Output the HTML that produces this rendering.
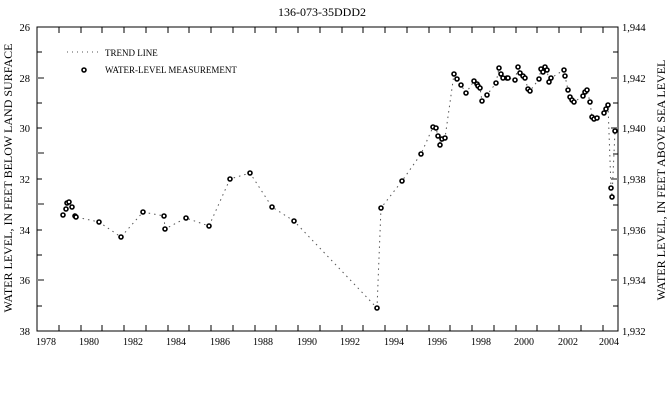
<!DOCTYPE html>
<html><head><meta charset="utf-8"><style>
html,body{margin:0;padding:0;background:#fff;}
svg{display:block;font-family:"Liberation Serif",serif;}
</style></head><body>
<svg width="671" height="410" viewBox="0 0 671 410" xmlns="http://www.w3.org/2000/svg">
<text x="322" y="16" font-size="12" text-anchor="middle">136-073-35DDD2</text>
<rect x="37" y="27" width="581" height="304" fill="none" stroke="#000" stroke-width="1"/>
<g font-size="10.5" text-anchor="end">
<text x="30" y="31">26</text><text x="30" y="82">28</text><text x="30" y="132">30</text><text x="30" y="183">32</text><text x="30" y="234">34</text><text x="30" y="284">36</text><text x="30" y="335">38</text>
</g>
<g font-size="10.5">
<text x="622" y="31">1,944</text><text x="622" y="82">1,942</text><text x="622" y="132">1,940</text><text x="622" y="183">1,938</text><text x="622" y="234">1,936</text><text x="622" y="284">1,934</text><text x="622" y="335">1,932</text>
</g>
<g font-size="10" text-anchor="middle">
<text x="46" y="345">1978</text><text x="89" y="345">1980</text><text x="133" y="345">1982</text><text x="176" y="345">1984</text><text x="220" y="345">1986</text><text x="263" y="345">1988</text><text x="307" y="345">1990</text><text x="350" y="345">1992</text><text x="394" y="345">1994</text><text x="437" y="345">1996</text><text x="481" y="345">1998</text><text x="524" y="345">2000</text><text x="568" y="345">2002</text><text x="609" y="345">2004</text>
</g>
<text transform="translate(12,178) rotate(-90)" font-size="12" text-anchor="middle">WATER LEVEL, IN FEET BELOW LAND SURFACE</text>
<text transform="translate(665,180) rotate(-90)" font-size="12" text-anchor="middle">WATER LEVEL, IN FEET ABOVE SEA LEVEL</text>
<g stroke="#000" stroke-width="1">
<path d="M59 27v6M81 27v6M102 27v6M124 27v6M146 27v6M168 27v6M189 27v6M211 27v6M233 27v6M255 27v6M276 27v6M298 27v6M320 27v6M342 27v6M363 27v6M385 27v6M407 27v6M429 27v6M450 27v6M472 27v6M494 27v6M516 27v6M537 27v6M559 27v6M581 27v6M603 27v6"/>
<path d="M59 331v-6M81 331v-6M102 331v-6M124 331v-6M146 331v-6M168 331v-6M189 331v-6M211 331v-6M233 331v-6M255 331v-6M276 331v-6M298 331v-6M320 331v-6M342 331v-6M363 331v-6M385 331v-6M407 331v-6M429 331v-6M450 331v-6M472 331v-6M494 331v-6M516 331v-6M537 331v-6M559 331v-6M581 331v-6M603 331v-6"/>
<path d="M37 52h5M37 103h5M37 128h5M37 179h5M37 230h5M37 255h5M37 306h5M618 52h-5M618 103h-5M618 154h-5M618 205h-5M618 255h-5M618 306h-5"/>
</g>
<g stroke="#888" stroke-width="2">
<path d="M37 78h7M37 153h7M37 204h7M37 280h7M618 78h-7M618 128h-7M618 179h-7M618 230h-7M618 280h-7"/>
</g>
<path d="M67 52h33" stroke="#555" stroke-width="1" stroke-dasharray="1,4"/>
<text x="105" y="56" font-size="9">TREND LINE</text>
<circle cx="84" cy="70" r="2" fill="#fff" stroke="#000" stroke-width="1.6"/>
<text x="105" y="73" font-size="9">WATER-LEVEL MEASUREMENT</text>
<polyline fill="none" stroke="#555" stroke-width="1" stroke-dasharray="1.5,4" points="63,215 66,209 67,203 69,202 72,207 75,216 76,217 99,222 121,237 143,212 164,216 165,229 186,218 209,226 230,179 250,173 272,207 294,221 377,308 381,208 402,181 421,154 433,127 436,128 438,136 440,145 442,139 445,138 454,74 457,79 461,85 466,93 474,81 477,84 478,86 480,88 482,101 487,95 496,83 499,68 501,74 503,78 507,78 508,78 515,80 518,67 520,73 523,76 525,78 528,89 530,91 539,79 541,69 543,72 545,67 547,70 549,82 551,78 564,70 565,76 568,90 570,97 572,100 574,102 583,96 585,92 587,90 590,102 592,117 594,119 597,118 604,113 606,109 608,105 611,188 612,197 615,131"/>
<g fill="#fff" stroke="#000" stroke-width="1.6">
<circle cx="63" cy="215" r="2"/><circle cx="66" cy="209" r="2"/><circle cx="67" cy="203" r="2"/><circle cx="69" cy="202" r="2"/><circle cx="72" cy="207" r="2"/><circle cx="75" cy="216" r="2"/><circle cx="76" cy="217" r="2"/><circle cx="99" cy="222" r="2"/><circle cx="121" cy="237" r="2"/><circle cx="143" cy="212" r="2"/><circle cx="164" cy="216" r="2"/><circle cx="165" cy="229" r="2"/><circle cx="186" cy="218" r="2"/><circle cx="209" cy="226" r="2"/><circle cx="230" cy="179" r="2"/><circle cx="250" cy="173" r="2"/><circle cx="272" cy="207" r="2"/><circle cx="294" cy="221" r="2"/><circle cx="377" cy="308" r="2"/><circle cx="381" cy="208" r="2"/><circle cx="402" cy="181" r="2"/><circle cx="421" cy="154" r="2"/><circle cx="433" cy="127" r="2"/><circle cx="436" cy="128" r="2"/><circle cx="438" cy="136" r="2"/><circle cx="440" cy="145" r="2"/><circle cx="442" cy="139" r="2"/><circle cx="445" cy="138" r="2"/><circle cx="454" cy="74" r="2"/><circle cx="457" cy="79" r="2"/><circle cx="461" cy="85" r="2"/><circle cx="466" cy="93" r="2"/><circle cx="474" cy="81" r="2"/><circle cx="477" cy="84" r="2"/><circle cx="478" cy="86" r="2"/><circle cx="480" cy="88" r="2"/><circle cx="482" cy="101" r="2"/><circle cx="487" cy="95" r="2"/><circle cx="496" cy="83" r="2"/><circle cx="499" cy="68" r="2"/><circle cx="501" cy="74" r="2"/><circle cx="503" cy="78" r="2"/><circle cx="507" cy="78" r="2"/><circle cx="508" cy="78" r="2"/><circle cx="515" cy="80" r="2"/><circle cx="518" cy="67" r="2"/><circle cx="520" cy="73" r="2"/><circle cx="523" cy="76" r="2"/><circle cx="525" cy="78" r="2"/><circle cx="528" cy="89" r="2"/><circle cx="530" cy="91" r="2"/><circle cx="539" cy="79" r="2"/><circle cx="541" cy="69" r="2"/><circle cx="543" cy="72" r="2"/><circle cx="545" cy="67" r="2"/><circle cx="547" cy="70" r="2"/><circle cx="549" cy="82" r="2"/><circle cx="551" cy="78" r="2"/><circle cx="564" cy="70" r="2"/><circle cx="565" cy="76" r="2"/><circle cx="568" cy="90" r="2"/><circle cx="570" cy="97" r="2"/><circle cx="572" cy="100" r="2"/><circle cx="574" cy="102" r="2"/><circle cx="583" cy="96" r="2"/><circle cx="585" cy="92" r="2"/><circle cx="587" cy="90" r="2"/><circle cx="590" cy="102" r="2"/><circle cx="592" cy="117" r="2"/><circle cx="594" cy="119" r="2"/><circle cx="597" cy="118" r="2"/><circle cx="604" cy="113" r="2"/><circle cx="606" cy="109" r="2"/><circle cx="608" cy="105" r="2"/><circle cx="611" cy="188" r="2"/><circle cx="612" cy="197" r="2"/><circle cx="615" cy="131" r="2"/>
</g>
</svg>
</body></html>
